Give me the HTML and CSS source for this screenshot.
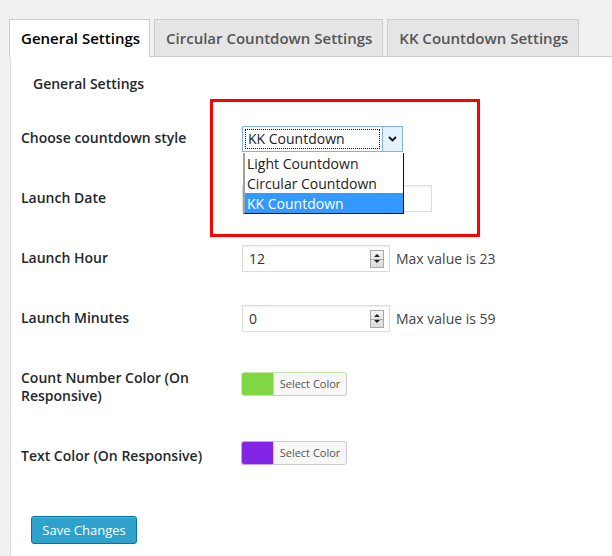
FILE: index.html
```html
<!DOCTYPE html>
<html>
<head>
<meta charset="utf-8">
<link rel="stylesheet" href="styles.css">
</head>
<body>
<div class="wrap">
  <div class="tabs">
    <div class="tab active">General Settings</div>
    <div class="tab">Circular Countdown Settings</div>
    <div class="tab">KK Countdown Settings</div>
  </div>
  <div class="panel">
    <div class="annot"></div>
    <h3 class="section">General Settings</h3>
    <div class="row">
      <div class="label">Choose countdown style</div>
      <div class="field f1">
        <div class="select">
          <div class="select-val"><span>KK Countdown</span></div>
          <div class="select-btn">
            <svg width="9" height="6" viewBox="0 0 9 6"><path d="M1 1 L4.5 4.5 L8 1" fill="none" stroke="#111" stroke-width="1.8"/></svg>
          </div>
          <ul class="options">
            <li>Light Countdown</li>
            <li>Circular Countdown</li>
            <li class="sel">KK Countdown</li>
          </ul>
        </div>
      </div>
    </div>
    <div class="row">
      <div class="label">Launch Date</div>
      <div class="field f2"><div class="text-input date"></div></div>
    </div>
    <div class="row">
      <div class="label">Launch Hour</div>
      <div class="field f2">
        <div class="num"><span>12</span><span class="spin"><i class="up"></i><i class="dn"></i></span></div>
        <span class="hint">Max value is 23</span>
      </div>
    </div>
    <div class="row">
      <div class="label">Launch Minutes</div>
      <div class="field f2">
        <div class="num"><span>0</span><span class="spin"><i class="up"></i><i class="dn"></i></span></div>
        <span class="hint">Max value is 59</span>
      </div>
    </div>
    <div class="row tall">
      <div class="label">Count Number Color (On Responsive)</div>
      <div class="field f5">
        <div class="picker green"><span class="swatch"></span><span class="pick-btn">Select Color</span></div>
      </div>
    </div>
    <div class="row">
      <div class="label">Text Color (On Responsive)</div>
      <div class="field f6">
        <div class="picker purple"><span class="swatch"></span><span class="pick-btn">Select Color</span></div>
      </div>
    </div>
    <div class="actions"><button class="save">Save Changes</button></div>
  </div>
</div>
</body>
</html>
```

FILE: styles.css
```css
* { box-sizing: border-box; }
html, body { margin: 0; padding: 0; }
body {
  background: #f1f1f1;
  font-family: "Open Sans", "DejaVu Sans", sans-serif;
  color: #222;
  width: 612px;
  height: 556px;
  overflow: hidden;
}
.wrap { padding: 19px 0 0 9px; height: 556px; display: flex; flex-direction: column; }
.tabs {
  display: flex;
  gap: 4px;
  border-bottom: 1px solid #ccc;
  margin-left: 1px;
}
.tab {
  border: 1px solid #ccc;
  border-bottom: none;
  background: #e5e5e5;
  color: #555;
  font-size: 15px;
  font-weight: 600;
  line-height: 26px;
  padding: 5px 10px 5px 11px;
  height: 37px;
}
.tab.active {
  background: #fff;
  color: #000;
  margin-bottom: -1px;
  height: 38px;
  padding-left: 11px;
  padding-right: 9px;
}
.tab:first-child { margin-left: -1px; }
.panel {
  flex: 1;
  background: #fff;
  border-left: 1px solid #ddd;
  margin-left: 1px;
  padding: 0 10px;
  position: relative;
}
.annot {
  position: absolute;
  left: 199px;
  top: 42px;
  width: 270px;
  height: 138px;
  border: 3px solid #f00;
  pointer-events: none;
}
.section {
  margin: 17px 0 15px 12px;
  font-size: 14px;
  font-weight: 600;
  line-height: 20px;
  color: #23282d;
}
.row {
  display: grid;
  grid-template-columns: 221px 1fr;
  min-height: 60px;
}
.row.tall { min-height: 78px; }
.label {
  padding: 20px 10px 0 0;
  font-size: 14px;
  font-weight: 600;
  line-height: 18px;
  color: #23282d;
}
.field { display: flex; align-items: center; gap: 6px; align-self: start; font-size: 14px; color: #333; }
.f1 { padding-top: 17px; }
.f2 { padding-top: 16px; }
.f5 { padding-top: 23px; }
.f6 { padding-top: 14px; }

.select { position: relative; display: flex; width: 161px; height: 26px; border: 1px solid #7eb4ea; background: #fff; z-index: 2; }
.select-val { flex: 1; padding: 2px; }
.select-val span {
  display: block;
  height: 20px;
  border: 1px dotted #111;
  line-height: 18px;
  padding-left: 2px;
  color: #222;
}
.select-btn {
  width: 20px;
  border-left: 1px solid #7eb4ea;
  background: #e5f1fb;
  display: flex; align-items: center; justify-content: center;
}
.options {
  position: absolute;
  left: 0;
  top: 26px;
  width: 161px;
  margin: 0;
  padding: 0;
  list-style: none;
  background: #fff;
  border: 1px solid #111;
  border-left: 2px solid #a0a0a0;
  border-top: none;
}
.options li { height: 20px; line-height: 22px; padding-left: 2px; color: #222; font-size: 14px; }
.options li.sel { background: #3399ff; color: #fff; }

.text-input, .num {
  height: 27px;
  border: 1px solid #ddd;
  box-shadow: inset 0 1px 2px rgba(0,0,0,.07);
  background: #fff;
}
.date { width: 190px; }
.num { width: 148px; display: flex; align-items: center; justify-content: space-between; padding: 0 5px 0 6px; color: #333; }
.spin {
  width: 14px; height: 18px;
  border: 1px solid #a8a8a8;
  background: linear-gradient(#f4f4f4, #dcdcdc);
  display: flex; flex-direction: column; align-items: center; justify-content: space-evenly;
  position: relative;
}
.spin::after { content: ""; position: absolute; left: 0; right: 0; top: 8px; border-top: 1px solid #a8a8a8; }
.spin i { width: 0; height: 0; border-left: 3px solid transparent; border-right: 3px solid transparent; }
.spin .up { border-bottom: 3px solid #222; }
.spin .dn { border-top: 3px solid #222; }
.hint { color: #444; }

.picker { display: flex; height: 24px; border-radius: 3px; margin-left: -1px; }
.swatch { width: 32px; height: 24px; border-radius: 3px 0 0 3px; }
.green .swatch { background: #81d742; border: 1px solid #c4e8a8; border-right: none; }
.purple .swatch { background: #8224e3; border: 1px solid #c6a3ef; border-right: none; }
.pick-btn {
  width: 74px;
  height: 24px;
  border: 1px solid #ccc;
  border-radius: 0 3px 3px 0;
  background: #f7f7f7;
  font-size: 11px;
  line-height: 22px;
  text-align: center;
  color: #555;
}
.green .pick-btn { border-color: #c4e8a8 #ccc #ccc #ccc; }

.actions { padding: 29px 0 0 10px; }
.save {
  font-family: "Open Sans", "DejaVu Sans", sans-serif;
  width: 106px;
  height: 28px;
  background: #2ea2cc;
  border: 1px solid #0074a2;
  border-radius: 3px;
  color: #fff;
  font-size: 13px;
  padding: 0;
  box-shadow: inset 0 1px 0 rgba(120,200,230,.5);
}
```
